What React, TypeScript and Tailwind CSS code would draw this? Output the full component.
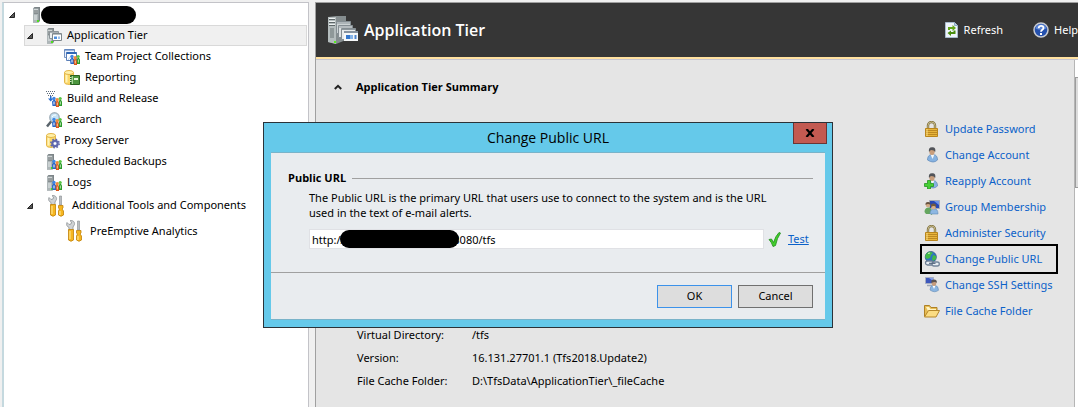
import type { ReactNode } from "react";
import clsx from "clsx";

type IconProps = { className?: string };

const Svg = ({
  size = 16,
  children,
}: {
  size?: number;
  children: ReactNode;
}) => (
  <svg
    width={size}
    height={size}
    viewBox={`0 0 ${size} ${size}`}
    className="shrink-0"
    aria-hidden="true"
  >
    {children}
  </svg>
);

const Tower = () => (
  <g>
    <path d="M1 1.500 2.500 0H8v14l-1.500 1.500H1z" fill="#7d8588" />
    <path d="M1 1.500h5.500v14H1z" fill="#aeb6b8" />
    <path d="M2 3h4M2 5h4" stroke="#f4f6f6" />
    <path d="M2 4h4M2 6h4" stroke="#5d6567" />
    <path d="M2 8h3v5H2z" fill="#c9d0d1" />
    <path d="M5 13h2v2H5z" fill="#4be01c" />
  </g>
);

const People = () => (
  <g>
    <path d="M6 10.500 7.500 9h1.500L10 10.500V15H6.500z" fill="#2465c8" />
    <circle cx="8" cy="7.500" r="1.700" fill="#3e86e4" />
    <path d="M7.500 10.500h1v3h-1z" fill="#fff" />
    <path d="M9.500 11.500 10.500 10H12l1 1.500V16h-3z" fill="#d8541b" />
    <circle cx="11.200" cy="8.700" r="1.700" fill="#ef8a3c" />
    <path d="M10.800 11.500h.9v3h-.9z" fill="#ffe2b0" />
    <path d="M12.800 10.500 13.500 9h1.500l1 1.500V15h-3z" fill="#2c9b2a" />
    <circle cx="14.200" cy="7.500" r="1.600" fill="#58c443" />
    <path d="M13.900 10.500h.8v3h-.8z" fill="#d9f5cf" />
  </g>
);

const Cylinder = () => (
  <g>
    <path d="M.5 2.500v10c0 2.500 9 2.500 9 0v-10z" fill="#fbd868" stroke="#e3b548" />
    <path d="M2.500 4.500v8" stroke="#fff3b8" strokeWidth="2" />
    <ellipse cx="5" cy="2.500" rx="4.500" ry="2" fill="#fff0a8" stroke="#e3b548" />
  </g>
);

const ServerIcon = () => (
  <svg width={9} height={16} viewBox="0 0 9 16" className="shrink-0" aria-hidden="true">
    <Tower />
  </svg>
);

const AppTierIcon = () => (
  <Svg>
    <Tower />
    <path d="M3.500 3.500h9v7h-9z" fill="#eceff0" stroke="#8c9499" />
    <path d="M4 4.500h8" stroke="#a9b0b4" />
    <path d="M6.500 5.500h9v7h-9z" fill="#fff" stroke="#7e878c" />
    <path d="M7 6.500h8" stroke="#b5bcc0" />
    <path d="M8 8.500h3v2.500H8z" fill="#4f8fdc" />
    <path d="M12 8.500h2v2.500h-2z" fill="#9cc0ea" />
  </Svg>
);

const CollectionsIcon = () => (
  <Svg>
    <path d="M.5.500h10v8H.5z" fill="#eaf1fb" stroke="#7795c4" />
    <path d="M.5 1h10" stroke="#4d76b8" />
    <path d="M2.500 3.500h10v8h-10z" fill="#fff" stroke="#5c80b8" />
    <path d="M2.500 4h10" stroke="#2f66b4" strokeWidth="2" />
    <path d="M4 11 7.500 6" stroke="#bcd2ee" />
    <People />
  </Svg>
);

const ReportingIcon = () => (
  <Svg>
    <Cylinder />
    <path d="M6.500 5.500h9v9h-9z" fill="#4d963f" stroke="#28621f" />
    <path d="M8.500 6v8" stroke="#a9d59a" />
    <path d="M10 8h4v2h-4z" fill="#e8f6dc" />
    <path d="M6 7.500h1.500M6 9.500h1.500M6 11.500h1.500" stroke="#d8ead0" />
  </Svg>
);

const BuildIcon = () => (
  <Svg>
    <path
      d="M0 .5h1m1 0h1m1 0h1m1 0h1m1 0h1M1 2.500h1m1 0h1m1 0h1m1 0h1M2 4.500h1m1 0h1m1 0h1"
      stroke="#5c6b7b"
    />
    <path d="M4 5h1.500v2.500h2L4.700 10.500 2 7.500h2z" fill="#2b6ed0" />
    <People />
  </Svg>
);

const SearchIcon = () => (
  <Svg>
    <path d="M1 14.500 5.500 9" stroke="#59636b" strokeWidth="2.500" />
    <circle cx="8.500" cy="5.500" r="4.700" fill="#c4e2f5" stroke="#a3b1bb" strokeWidth="1.500" />
    <path d="M6 5q1-2.500 4-2" stroke="#fff" fill="none" />
    <People />
  </Svg>
);

const ProxyIcon = () => (
  <Svg>
    <Cylinder />
    <circle cx="9" cy="10.500" r="2.800" fill="#a9addb" stroke="#6067ac" strokeWidth="2" />
    <circle
      cx="9"
      cy="10.500"
      r="4.200"
      fill="none"
      stroke="#6067ac"
      strokeWidth="1.500"
      strokeDasharray="1.650 1.650"
    />
    <circle cx="9" cy="10.500" r="1.200" fill="#fff" />
  </Svg>
);

const ServerPeopleIcon = () => (
  <Svg>
    <Tower />
    <People />
  </Svg>
);

const ToolsIcon = () => (
  <svg width={16} height={22} viewBox="0 0 16 22" className="shrink-0" aria-hidden="true">
    <path
      d="M1 2.500 3 4.500 5 4 5.500 2 4 .7C7 0 9 2 8.500 4.500L7 7v4H3V7.500C1 6.500 0 5 1 2.500z"
      fill="#cfd2d4"
      stroke="#8d9296"
      strokeWidth=".8"
    />
    <path d="M2.500 9.500h5V20q-2.500 2.500-5 0z" fill="#f6b61f" stroke="#c08007" strokeWidth=".8" />
    <path d="M4 11v8" stroke="#ffe48a" strokeWidth="1.200" />
    <path d="M11.500 1h2v9h-2z" fill="#b9bdc0" stroke="#888d91" strokeWidth=".6" />
    <path
      d="M10.500 10.500h4.500v2.500l-1 1 1.500 2V20q-2.500 2.500-5 0v-4l1-2-1-1z"
      fill="#f6b61f"
      stroke="#c08007"
      strokeWidth=".8"
    />
    <path d="M12 16v4" stroke="#ffe48a" strokeWidth="1.200" />
  </svg>
);

const BigAppTierIcon = () => (
  <svg width={30} height={28} viewBox="0 0 30 28" className="shrink-0" aria-hidden="true">
    <path d="M0 1 8 0h10v24L8 28 0 26z" fill="#858d8f" />
    <path d="M0 1h8v27l-8-2z" fill="#b4bcbd" />
    <path d="M1 3.500h6M1 6.500h6M1 9.500h6" stroke="#5e6769" />
    <path d="M1 2.500h6M1 5.500h6M1 8.500h6" stroke="#eef2f2" />
    <path d="M2 12h4v10H2z" fill="#8f9899" />
    <path d="M6 25h2v2H6z" fill="#58ec20" />
    <path d="M8.500 5.500h14v12h-14z" fill="#cdd3d5" stroke="#858e93" />
    <path d="M9 7h13" stroke="#8e979c" />
    <path d="M10.500 9.500h14v12h-14z" fill="#dde1e3" stroke="#858e93" />
    <path d="M11 11h13" stroke="#8e979c" />
    <path d="M13.500 12.500h14v11h-14z" fill="#e8ebec" stroke="#858e93" />
    <path d="M14 13.500h13" stroke="#8e979c" />
    <path d="M16 15h14v10H16z" fill="#f6f8f9" />
    <path d="M16 16h14" stroke="#8793a0" strokeWidth="2" />
    <path d="M18 19h4v4h-4z" fill="#3678cc" />
    <path d="M22 19h3v4h-3z" fill="#85b4e9" />
    <path d="M26.500 19h2v4h-2z" fill="#4c84cc" />
  </svg>
);

const RefreshIcon = () => (
  <Svg>
    <path d="M.5.500h9l3 3v12H.5z" fill="#eef4fb" stroke="#a8bbce" />
    <path d="M9.500.500v3h3" fill="#b7cde3" stroke="#8ca9c6" />
    <path d="M3 8V5h4.500V3L11 6 7.500 9V7H5v1z" fill="#62a51b" />
    <path d="M10.500 8.500V12H6v2l-3.500-3L6 8.500V10h2.500V8.500z" fill="#4a8d10" />
  </Svg>
);

const HelpIcon = () => (
  <Svg>
    <circle cx="8" cy="8" r="7" fill="#2450ad" stroke="#c8cbd2" strokeWidth="1.500" />
    <path d="M2.500 6.500a5.700 5.700 0 0 1 11 0Q8 9 2.500 6.500z" fill="#5c86d6" />
    <path
      d="M5.700 6.200C5.700 3 10.500 3.200 10.500 6 10.500 7.800 8 7.700 8 9.800"
      fill="none"
      stroke="#fff"
      strokeWidth="1.800"
    />
    <path d="M7 11h2v2H7z" fill="#fff" />
  </Svg>
);

const LockIcon = () => (
  <Svg>
    <path d="M4 8V4.500a3.500 3.500 0 0 1 7 0V8" fill="none" stroke="#81713f" strokeWidth="2.400" />
    <path d="M4 8V4.500a3.500 3.500 0 0 1 7 0V8" fill="none" stroke="#d8cf9f" strokeWidth=".8" />
    <path d="M1.500 7.500h12v8h-12z" fill="#e8b53c" stroke="#b9851c" />
    <path d="M2 9.500h11M2 11.500h11M2 13.500h11" stroke="#bd8922" />
    <path d="M3 8v7" stroke="#f9de85" />
  </Svg>
);

const Person = () => (
  <g>
    <path d="M3.500 13q0-5 4-5.500h2q4 .5 4 5.500-4 4-10 0z" fill="#86b2e1" stroke="#5b86b7" strokeWidth=".7" />
    <path d="M6.500 7.500 8.500 12l2-4.500z" fill="#f2f6fa" />
    <ellipse cx="8" cy="4.500" rx="2.700" ry="3.600" fill="#c99e7c" />
    <path d="M5 5Q4 0 8.500.3q3.700.2 2.700 4.700Q10 3 7.500 3 6 3 5 5z" fill="#525459" />
  </g>
);

const UserIcon = () => (
  <Svg>
    <Person />
  </Svg>
);

const UserAddIcon = () => (
  <Svg>
    <Person />
    <path
      d="M3.500 7.500h3v3h3v3h-3v2.500h-3v-2.500h-3v-3h3z"
      fill="#47cf35"
      stroke="#269522"
      strokeWidth=".8"
    />
  </Svg>
);

const GroupIcon = () => (
  <Svg>
    <path d="M5.500 1.500h10v8h-10z" fill="#2848b5" stroke="#a9adb5" />
    <path d="M10 2h5v4z" fill="#7196e8" />
    <path d="M.5 13q0-4 3.500-4.500t4 4.500-1 2h-5z" fill="#65a65f" />
    <circle cx="4" cy="6" r="2.300" fill="#d2ab87" />
    <path d="M1.600 6Q1 3 4 3t2.500 3Q4 4 1.600 6z" fill="#65513f" />
    <path d="M6 15q0-5 4-5.200T14 15z" fill="#8db7e2" stroke="#6089b7" strokeWidth=".6" />
    <circle cx="9.500" cy="8" r="2.400" fill="#d9b18c" />
    <path d="M7 8q-.7-3.500 2.500-3.500T12 8q-2-2-5 0z" fill="#735a3d" />
  </Svg>
);

const GlobeLinkIcon = () => (
  <Svg>
    <circle cx="6.800" cy="6" r="5.600" fill="#2e74c3" stroke="#31567c" strokeWidth=".7" />
    <path d="M2 3q3-3 5-2l2 1-2 2-1 3-3 1-2-2zM9 4l3 1v3l-3 2-1-2z" fill="#42ba46" />
    <path d="M4 2.500 6 2" stroke="#c7f3bd" />
    <rect x="1.500" y="10" width="8" height="4" rx="2" fill="#e8edf2" stroke="#6b7c92" strokeWidth="1.300" />
    <rect x="8" y="11" width="7.300" height="4" rx="2" fill="#e8edf2" stroke="#74859a" strokeWidth="1.300" />
    <path d="M5 12.300h6.500" stroke="#55677e" strokeWidth="1.200" />
  </Svg>
);

const SshIcon = () => (
  <Svg>
    <path d="M1.500.500h8v6h-8z" fill="#3c57bc" stroke="#a6adc2" />
    <path d="M5 1h4v3z" fill="#849fea" />
    <path d="M3 8.500h6" stroke="#9ca5b5" strokeWidth="1.500" />
    <path d="M6 13q0-4 3-4.700h2q3.500.7 3.500 5-4 3-8.500-.3z" fill="#8bb5e1" stroke="#5f89b6" strokeWidth=".6" />
    <path d="M8.500 8.500 10 12l1.500-3.500z" fill="#fff" />
    <ellipse cx="10" cy="6" rx="2.300" ry="2.900" fill="#c69c7c" />
    <path d="M7.500 6q-1-3.500 2.500-3.500T12.700 6Q11 4 7.500 6z" fill="#5a5453" />
  </Svg>
);

const FolderIcon = () => (
  <Svg>
    <path d="M.5 13.500v-11h5l1.500 2h6v3" fill="#e7bd55" stroke="#af8126" />
    <path d="M2 4h3l1.500 2H12v2H4z" fill="#fff4c4" />
    <path d="M.5 14 4.500 7.500h11L12 14z" fill="#fbdc82" stroke="#b5872b" />
  </Svg>
);

const CheckIcon = () => (
  <Svg>
    <path
      d="M2 8.500 4.500 8l2 3.500Q8.500 5 12 1.500l1.500.5Q10 7 8.500 14.500L6 15.500Q4.500 11 2 8.500z"
      fill="#42cf2c"
      stroke="#218d1c"
      strokeWidth=".8"
    />
  </Svg>
);

const ExpandArrow = ({ className }: IconProps) => (
  <svg width={8} height={8} viewBox="0 0 8 8" className={clsx("shrink-0", className)} aria-hidden="true">
    <path d="M6.500 1.500V6.500H1.500z" fill="#595959" stroke="#262626" />
  </svg>
);

const treeItems = [
  { label: "Team Project Collections", icon: <CollectionsIcon />, row: "h-[21px] pl-10 gap-[5px]" },
  { label: "Reporting", icon: <ReportingIcon />, row: "h-[21px] pl-10 gap-[5px]" },
  { label: "Build and Release", icon: <BuildIcon />, row: "h-[21px] pl-[22px] gap-[5px]" },
  { label: "Search", icon: <SearchIcon />, row: "h-[21px] pl-[22px] gap-[5px]" },
  { label: "Proxy Server", icon: <ProxyIcon />, row: "h-[21px] pl-[22px] gap-[2px]" },
  { label: "Scheduled Backups", icon: <ServerPeopleIcon />, row: "h-[21px] pl-[22px] gap-[5px]" },
  { label: "Logs", icon: <ServerPeopleIcon />, row: "h-[21px] pl-[22px] gap-[5px]" },
];

const actions = [
  { label: "Update Password", icon: <LockIcon /> },
  { label: "Change Account", icon: <UserIcon /> },
  { label: "Reapply Account", icon: <UserAddIcon /> },
  { label: "Group Membership", icon: <GroupIcon /> },
  { label: "Administer Security", icon: <LockIcon /> },
  { label: "Change Public URL", icon: <GlobeLinkIcon />, highlighted: true },
  { label: "Change SSH Settings", icon: <SshIcon /> },
  { label: "File Cache Folder", icon: <FolderIcon /> },
];

const details = [
  { label: "Virtual Directory:", value: "/tfs" },
  { label: "Version:", value: "16.131.27701.1 (Tfs2018.Update2)" },
  { label: "File Cache Folder:", value: "D:\\TfsData\\ApplicationTier\\_fileCache" },
];

const Sidebar = () => (
  <nav className="w-[307px] shrink-0 border-l-2 border-r border-t border-l-[#c5d9df] border-r-[#c3c3c8] border-t-[#c3c3c8] bg-white pl-[20px] pt-px">
    <div className="-ml-4 flex h-[21px] items-center">
      <ExpandArrow className="mr-4" />
      <ServerIcon />
      <span className="h-[18px] w-[95px] rounded-full bg-black" />
    </div>
    <ul>
      <li className="mr-px flex h-[21px] items-center gap-[5px] border border-[#d9d9d9] bg-[#f0f0f0] pl-px">
        <ExpandArrow className="mr-[7px]" />
        <AppTierIcon />
        Application Tier
      </li>
      {treeItems.map(({ label, icon, row }) => (
        <li key={label} className={clsx("flex items-center", row)}>
          {icon}
          {label}
        </li>
      ))}
      <li className="flex h-[25px] items-center gap-2 pl-[2px]">
        <ExpandArrow className="mr-[6px]" />
        <ToolsIcon />
        Additional Tools and Components
      </li>
      <li className="flex h-[26px] items-center gap-2 pl-[42px]">
        <ToolsIcon />
        PreEmptive Analytics
      </li>
    </ul>
  </nav>
);

const ActionList = () => (
  <ul className="mr-4 mt-[56px] w-[138px] shrink-0">
    {actions.map(({ label, icon, highlighted }) => (
      <li key={label} className="flex h-[26px] items-center">
        <a
          href="#"
          className={clsx(
            "flex w-full items-center gap-[5px] border-2 pl-[2px] text-[#0b61c9]",
            highlighted ? "h-[30px] shrink-0 border-black" : "border-transparent"
          )}
        >
          {icon}
          {label}
        </a>
      </li>
    ))}
  </ul>
);

const ChangeUrlDialog = () => (
  <div
    role="dialog"
    aria-labelledby="dialog-title"
    className="absolute left-[263px] top-[122px] w-[570px] border border-[#2b3238] bg-[#65c9ea] px-[7px] pb-[7px]"
  >
    <div className="flex h-[29px] items-start">
      <h2
        id="dialog-title"
        className="grow pl-[32px] text-center font-['Open_Sans',sans-serif] text-[14px] leading-[30px]"
      >
        Change Public URL
      </h2>
      <button
        type="button"
        aria-label="Close"
        className="-mr-[2px] flex h-[21px] w-[34px] items-center justify-center border border-t-0 border-[#6b3534] bg-[#c35a51]"
      >
        <svg width={10} height={8} viewBox="0 0 10 8" aria-hidden="true">
          <path d="M1.500 0 8.500 8M8.500 0 1.500 8" stroke="#000" strokeWidth="2.200" />
        </svg>
      </button>
    </div>
    <form className="border-y border-[#79b3c9] bg-[#e9ecef]" onSubmit={(e) => e.preventDefault()}>
      <div className="border-b border-[#a0a0a0] pb-[23px] pl-[17px] pr-3 pt-4">
        <div className="flex items-center gap-[6px] leading-[18px]">
          <label htmlFor="public-url" className="font-['Open_Sans',sans-serif] font-bold">
            Public URL
          </label>
          <span className="h-px grow bg-[#a0a0a0]" />
        </div>
        <p className="mt-[3px] whitespace-normal pl-[21px] pr-8 leading-[15px]">
          The Public URL is the primary URL that users use to connect to the system and is the URL used in the text of e-mail alerts.
        </p>
        <div className="mt-[9px] flex items-center pl-[21px]">
          <div className="relative grow">
            <input
              id="public-url"
              type="text"
              defaultValue={"http://" + " ".repeat(38) + "8080/tfs"}
              className="block h-5 w-full border border-[#e0e1e5] bg-white px-[2px] outline-none"
            />
            <span className="absolute left-[31px] top-px h-[18px] w-[119px] rounded-full bg-black" />
          </div>
          <div className="flex w-[49px] shrink-0 items-center gap-[5px] pl-[3px]">
            <CheckIcon />
            <a href="#" className="text-[#0b61c9] underline">
              Test
            </a>
          </div>
        </div>
      </div>
      <div className="flex justify-end gap-[6px] px-3 pb-[11px] pt-3">
        <button type="submit" className="h-[23px] w-[75px] border border-[#3c92ea] bg-[#dddddd]">
          OK
        </button>
        <button type="button" className="h-[23px] w-[75px] border border-[#707070] bg-[#dddddd]">
          Cancel
        </button>
      </div>
    </form>
  </div>
);

const App = () => {
  return (
    <div className="relative flex min-h-screen overflow-hidden whitespace-nowrap bg-[#f0f0f0] pl-[2px] pt-[2px] font-['Noto_Sans','Open_Sans',sans-serif] text-[11px] text-black">
      <Sidebar />
      <main className="ml-[6px] flex min-w-0 grow flex-col border-l border-t border-[#a0a0a0] bg-[#e5e5e5]">
        <header className="flex h-[54px] shrink-0 items-center bg-[#363636] pl-3 text-white">
          <BigAppTierIcon />
          <h1 className="ml-[6px] font-['Open_Sans',sans-serif] text-[16px] font-semibold">
            Application Tier
          </h1>
          <div className="ml-auto flex gap-[30px]">
            <button type="button" className="flex items-center gap-[3px]">
              <RefreshIcon />
              Refresh
            </button>
            <button type="button" className="flex items-center gap-[5px]">
              <HelpIcon />
              Help
            </button>
          </div>
        </header>
        <div className="h-[3px] shrink-0 border-b border-[#c6c6d2] bg-[#ffe1a0]" />
        <div className="flex grow">
          <section className="grow pl-[18px] pt-[18px]">
            <h2 className="flex items-center gap-[14px] font-['Open_Sans',sans-serif] font-bold leading-[18px]">
              <svg width={8} height={6} viewBox="0 0 8 6" aria-hidden="true">
                <path d="M.8 5 4 1.800 7.200 5" fill="none" stroke="#222" strokeWidth="2" />
              </svg>
              Application Tier Summary
            </h2>
            <dl className="mt-[227px] grid grid-cols-[115px_1fr] pl-[23px] leading-[23px]">
              {details.map(({ label, value }) => (
                <div key={label} className="contents">
                  <dt>{label}</dt>
                  <dd>{value}</dd>
                </div>
              ))}
            </dl>
          </section>
          <ActionList />
          <div className="w-1 shrink-0 border-l border-[#b5b5b5] bg-white">
            <div className="mt-[17px] h-[111px] border-y border-l border-[#9c9c9c] bg-[#dcdcdc]" />
          </div>
        </div>
      </main>
      <ChangeUrlDialog />
    </div>
  );
};

export default App;
